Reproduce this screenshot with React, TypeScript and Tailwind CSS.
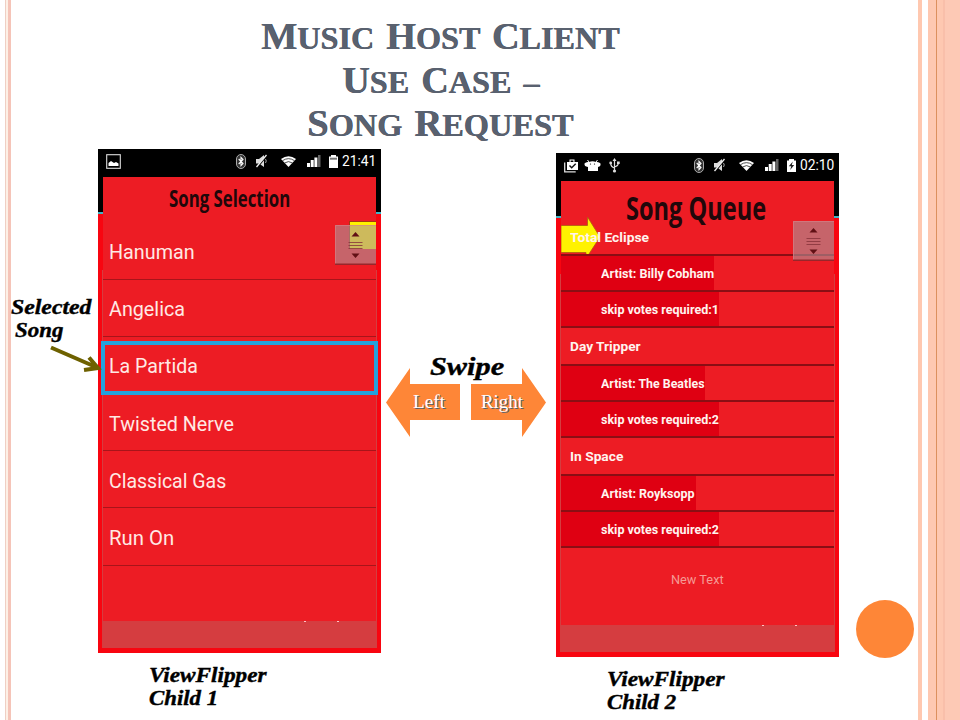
import { useLayoutEffect, useRef, type ReactNode } from "react";

// Text squeezed or stretched horizontally so that it takes exactly `w` pixels.
function Fit({ w, className = "", children }: { w: number; className?: string; children: ReactNode }) {
  const ref = useRef<HTMLSpanElement>(null);
  useLayoutEffect(() => {
    const el = ref.current;
    if (el) el.style.transform = `scaleX(${w / el.offsetWidth})`;
  }, [w]);
  return (
    <span className={`block whitespace-nowrap ${className}`} style={{ width: w }}>
      <span ref={ref} className="inline-block origin-left">{children}</span>
    </span>
  );
}

const SERIF = "font-['Liberation_Serif',serif]";

function TitleLine({ w, ml, children }: { w: number; ml: number; children: ReactNode }) {
  return (
    <div style={{ marginLeft: ml }}>
      <Fit w={w} className="h-[43.5px] text-[32px] leading-[43.5px] [word-spacing:4px]">{children}</Fit>
    </div>
  );
}

function Big({ children }: { children: string }) {
  return <span className="text-[38px] leading-none">{children}</span>;
}

function BluetoothIcon() {
  return (
    <svg className="ml-auto h-[15px] w-[10px]" viewBox="0 0 10 15">
      <rect x="0.5" y="0.5" width="9" height="14" rx="4.5" fill="#333" stroke="#aaa" />
      <path d="M2.7 5 7 9.5 5 11.7V3.3L7 5.5 2.7 10" fill="none" stroke="#fff" strokeWidth="1.1" />
    </svg>
  );
}

function MuteIcon() {
  return (
    <svg className="ml-[9px] h-[14px] w-[13px]" viewBox="0 0 13 14">
      <path d="M1 5h3l5-4v12L4 9.500H1z" fill="#ddd" />
      <path d="M10.500 5q1.500 2 0 4" fill="none" stroke="#aaa" />
      <path d="M12.500 1 2.500 13" stroke="#000" strokeWidth="1.500" />
      <path d="M11.500 1 1.500 13" stroke="#eee" strokeWidth="1.300" />
    </svg>
  );
}

function WifiIcon() {
  return (
    <svg className="ml-[13px] h-[11px] w-[15px]" viewBox="0 0 15 11">
      <path d="M0 3Q7.500-2.500 15 3L7.500 11z" fill="#fff" />
      <path d="M1.500 4.700Q7.500 .6 13.500 4.700M3.500 7Q7.500 4.200 11.500 7" fill="none" stroke="#222" strokeWidth=".8" />
    </svg>
  );
}

function SignalIcon() {
  return (
    <svg className="ml-[11px] h-[12px] w-[14px]" viewBox="0 0 14 12">
      <path d="M0 8h3v4H0zM3.700 5h3v7h-3zM7.400 2.500h3V12h-3z" fill="#fff" />
      <path d="M11 0h2.500v12H11z" fill="#666" />
    </svg>
  );
}

function BatteryIcon({ charging }: { charging?: boolean }) {
  return (
    <svg className="ml-[8px] h-[13px] w-[9px]" viewBox="0 0 9 13">
      <path d="M0 1.500h2V0h5v1.500h2V13H0z" fill="#fff" />
      {charging ? <path d="m5.800 2.500-4 4.700h2.400L3.200 11l4-5H4.800z" fill="#222" /> : <path d="M1 2.700h7v2H1z" fill="#777" />}
    </svg>
  );
}

function PictureIcon() {
  return (
    <svg className="h-[15px] w-[15px]" viewBox="0 0 15 15">
      <rect x=".7" y=".7" width="13.600" height="13.600" fill="none" stroke="#ddd" strokeWidth="1.100" />
      <path d="M2.500 12V9l2.500-2 3 2 2-1 2.500 1.500V12z" fill="#fff" />
    </svg>
  );
}

function QueueIcons() {
  return (
    <>
      <svg className="h-[15px] w-[15px]" viewBox="0 0 15 15">
        <path d="M3 4h2.500V1.500h5V4H14v8H3zM6.600 4h2.800V2.600H6.600z" fill="#fff" fillRule="evenodd" />
        <path d="M.7 4.500v9.300h11" fill="none" stroke="#ddd" strokeWidth="1.300" />
        <path d="m5.500 7.500 2.200 2.300 4-4" fill="none" stroke="#111" strokeWidth="1.400" />
      </svg>
      <svg className="ml-[5px] h-[13px] w-[17px]" viewBox="0 0 17 13">
        <path d="M.5 4.500Q2 2.500 5 3q3.500-1.500 7 0 3-.5 4.500 1.500.5 3-2.500 3.500v4H4V8Q0 7.500.5 4.500z" fill="#fff" />
        <path d="m5 3-1.500-2M12 3l1.500-2" stroke="#fff" />
        <circle cx="6.500" cy="5" r=".6" />
        <circle cx="10.500" cy="5" r=".6" />
      </svg>
      <svg className="ml-[8px] h-[15px] w-[11px]" viewBox="0 0 11 15">
        <path d="M5.500 2v10M5.500 10Q1.700 9 1.700 5M5.500 9Q9.300 8 9.300 5" fill="none" stroke="#ddd" strokeWidth="1.200" />
        <path d="m5.500 0 2 3h-4zM8 3.500h2.700V6H8z" fill="#ddd" />
        <circle cx="1.700" cy="5" r="1.400" fill="#ddd" />
        <circle cx="5.500" cy="13" r="1.600" fill="#ddd" />
      </svg>
    </>
  );
}

function StatusBar({ left, time, charging }: { left: ReactNode; time: string; charging?: boolean }) {
  return (
    <div className="flex h-[24px] items-center pr-[5px] pl-[8px]">
      {left}
      <BluetoothIcon />
      <MuteIcon />
      <WifiIcon />
      <SignalIcon />
      <BatteryIcon charging={charging} />
      <Fit w={34} className="ml-[4px] text-[15px] leading-[22px] text-white">{time}</Fit>
    </div>
  );
}

function ScrollHandle() {
  return (
    <svg className="h-[40px] w-[41px]" viewBox="0 0 41 40">
      <rect width="41" height="40" fill="#ac9599" fillOpacity=".6" />
      <path d="M.5 40V.5H41" fill="none" stroke="#d98288" strokeOpacity=".6" />
      <path d="M0 39.300h41" stroke="#98262b" strokeWidth="1.400" />
      <path d="m16.500 11.500 4-4.500 4 4.500zM16.500 28.500h8l-4 4.500z" fill="#611014" />
      <path d="M13.500 17.500h14M13.500 20.500h14M13.500 23.500h14" stroke="#86323a" strokeOpacity=".8" />
    </svg>
  );
}

function Phone({ status, children }: { status: ReactNode; children: ReactNode }) {
  return (
    <div className="flex h-[504px] w-[283px] flex-col bg-[linear-gradient(#000_63px,#3fb5c8_63px,#3fb5c8_65px,#f80510_65px)] font-[Roboto,sans-serif]">
      {status}
      <div className="mx-[4px] mt-[4px] flex h-[471px] flex-col bg-[linear-gradient(transparent_93px,#d53d40_93px)] px-px">
        <div className="relative h-[444px] bg-[#ed1c24]">{children}</div>
      </div>
    </div>
  );
}

const SONGS: [string, number][] = [
  ["Hanuman", 86], ["Angelica", 76], ["La Partida", 89], ["Twisted Nerve", 125], ["Classical Gas", 117], ["Run On", 65],
];

function SongSelection() {
  return (
    <Phone status={<StatusBar left={<PictureIcon />} time="21:41" />}>
      <div className="h-[45.5px] pl-[66px]">
        <Fit w={121} className="pt-[2px] font-['Open_Sans',sans-serif] text-[24px] leading-[38px] font-bold text-[#21070a]">Song Selection</Fit>
      </div>
      {SONGS.map(([name, w]) => (
        <div key={name} className="flex h-[57.2px] items-center border-b-[1.5px] border-[#a8141a] pt-[3px] pl-[6px]">
          <Fit w={w} className="text-[20px] leading-[24px] text-[#ffe9e4]">{name}</Fit>
        </div>
      ))}
      <div className="absolute top-[44px] left-[246px] h-[28px] w-[27px] border-t border-l border-[#a33b10] bg-[#fff200]" />
      <div className="absolute top-[48px] left-[232px]"><ScrollHandle /></div>
      <div className="absolute top-[164px] -left-[2px] h-[54px] w-[277px] border-4 border-[#25a2dd]" />
      <div className="absolute top-[444px] left-[201px] h-px w-[2px] bg-[#ffc4c4]" />
      <div className="absolute top-[444px] left-[234px] h-px w-[2px] bg-[#ffc4c4]" />
    </Phone>
  );
}

type Row = { text: string; w: number; h: number; fill?: number };
const QUEUE: Row[] = [
  { text: "Total Eclipse", w: 79, h: 37 },
  { text: "Artist: Billy Cobham", w: 113, h: 36, fill: 153 },
  { text: "skip votes required:1", w: 118, h: 36, fill: 158 },
  { text: "Day Tripper", w: 71, h: 38 },
  { text: "Artist: The Beatles", w: 104, h: 36, fill: 144 },
  { text: "skip votes required:2", w: 118, h: 36, fill: 158 },
  { text: "In Space", w: 53, h: 38 },
  { text: "Artist: Royksopp", w: 94, h: 36, fill: 135 },
  { text: "skip votes required:2", w: 118, h: 36, fill: 158 },
];

function SongQueue() {
  return (
    <Phone status={<StatusBar left={<QueueIcons />} time="02:10" charging />}>
      <div className="h-[38px] pl-[65px]">
        <Fit w={140} className="font-['Open_Sans',sans-serif] text-[33px] leading-[53px] font-bold text-[#21070a]">Song Queue</Fit>
      </div>
      <svg className="absolute top-[34px] left-0 h-[42px] w-[40px]" viewBox="0 0 40 42">
        <path d="M0 10.500h26.500V2L39 22 27 40.500h-2v-3H0z" fill="#fff200" stroke="#b05a10" strokeWidth=".8" />
      </svg>
      {QUEUE.map((r, i) => (
        <div key={i} className="relative flex border-b-2 border-[#8a0e14]" style={{ height: r.h }}>
          <div
            className={r.fill ? "flex items-center bg-[#df0012] pt-[2px] pl-[40px]" : "flex items-center pl-[9px]"}
            style={{ width: r.fill ?? 273 }}
          >
            <Fit w={r.w} className={`leading-[18px] font-bold text-[#fff3ee] ${r.fill ? "text-[12.5px]" : "text-[13.5px]"}`}>{r.text}</Fit>
          </div>
        </div>
      ))}
      <div className="pt-[23px] pl-[110px]">
        <Fit w={53} className="text-[13px] leading-[18px] text-[#f59a94]">New Text</Fit>
      </div>
      <div className="absolute top-[40px] left-[232px]"><ScrollHandle /></div>
      <div className="absolute top-[444px] left-[201px] h-px w-[2px] bg-[#ffc4c4]" />
      <div className="absolute top-[444px] left-[234px] h-px w-[2px] bg-[#ffc4c4]" />
    </Phone>
  );
}

function Caption({ n }: { n: string }) {
  return (
    <div className="mt-[11px] pl-[51px] text-[20.5px] leading-[23px] font-bold italic [-webkit-text-stroke:0.4px_#000]">
      <Fit w={118}>ViewFlipper</Fit>
      <Fit w={69}>Child {n}</Fit>
    </div>
  );
}

export default function App() {
  return (
    <div className={`flex h-[720px] w-[960px] overflow-hidden bg-white text-black ${SERIF}`}>
      <div className="flex w-[12px] pl-[5px]">
        <div className="w-px bg-[#efcfc3]" />
        <div className="w-[2px] bg-[#fdf0e6]" />
        <div className="w-[3px] bg-[#f5c4b8]" />
      </div>

      <main className="w-[906px]">
        <h1 className="h-[149px] pt-[17px] font-bold text-[#59616f] [text-shadow:0.5px_0_#454c59]">
          <TitleLine w={358} ml={249}><Big>M</Big>USIC <Big>H</Big>OST <Big>C</Big>LIENT</TitleLine>
          <TitleLine w={197} ml={330}><Big>U</Big>SE <Big>C</Big>ASE –</TitleLine>
          <TitleLine w={266} ml={295}><Big>S</Big>ONG <Big>R</Big>EQUEST</TitleLine>
        </h1>

        <div className="flex">
          <aside className="w-[86px] pt-[147px]">
            <div className="text-[20.5px] leading-[23px] font-bold italic [-webkit-text-stroke:0.4px_#000]">
              <Fit w={80} className="-ml-px">Selected</Fit>
              <Fit w={48} className="ml-[3px]">Song</Fit>
            </div>
            <svg className="relative z-10 mt-[2px] ml-[37px] h-[30px] w-[54px] overflow-visible" viewBox="0 0 54 30">
              <path d="M2 3.500 48 23.500M35 26l14-2L40 13.500" fill="none" stroke="#6e6100" strokeWidth="4" />
            </svg>
          </aside>

          <section className="w-[283px]">
            <SongSelection />
            <Caption n="1" />
          </section>

          <div className="w-[175px] pt-[205px]">
            <Fit w={74} className="ml-[49px] text-[25px] leading-[26px] font-bold italic [-webkit-text-stroke:0.4px_#000]">Swipe</Fit>
            <div className="-mt-[12px] flex gap-[11px] pl-[5px]">
              <div className="flex h-[69px] w-[74px] items-center bg-[#fe8637] pb-[2px] pl-[27px] [clip-path:polygon(0_50%,24px_0,24px_16px,100%_16px,100%_52px,24px_52px,24px_100%)]">
                <Fit w={32} className="text-[18px] leading-[22px] text-white [text-shadow:1px_1px_#575f6d]">Left</Fit>
              </div>
              <div className="flex h-[69px] w-[75px] items-center bg-[#fe8637] pb-[2px] pl-[10px] [clip-path:polygon(0_16px,51px_16px,51px_0,100%_50%,51px_100%,51px_52px,0_52px)]">
                <Fit w={42} className="text-[18px] leading-[22px] text-white [text-shadow:1px_1px_#575f6d]">Right</Fit>
              </div>
            </div>
          </div>

          <section className="w-[283px] pt-[4px]">
            <SongQueue />
            <Caption n="2" />
          </section>

          <div className="pt-[451px] pl-[17px]">
            <div className="h-[58px] w-[58px] rounded-full bg-[#fe8637]" />
          </div>
        </div>
      </main>

      <div className="flex w-[42px]">
        <div className="w-[4px] bg-[#ffc8b0]" />
        <div className="w-[6px]" />
        <div className="w-[8px] bg-[#fec8b1]" />
        <div className="w-px bg-[#dc905e]" />
        <div className="w-[6px] bg-[#fec8b1]" />
        <div className="w-[2px] bg-[#f9bfaa]" />
        <div className="w-[15px] bg-[#fdc9b5]" />
      </div>
    </div>
  );
}
